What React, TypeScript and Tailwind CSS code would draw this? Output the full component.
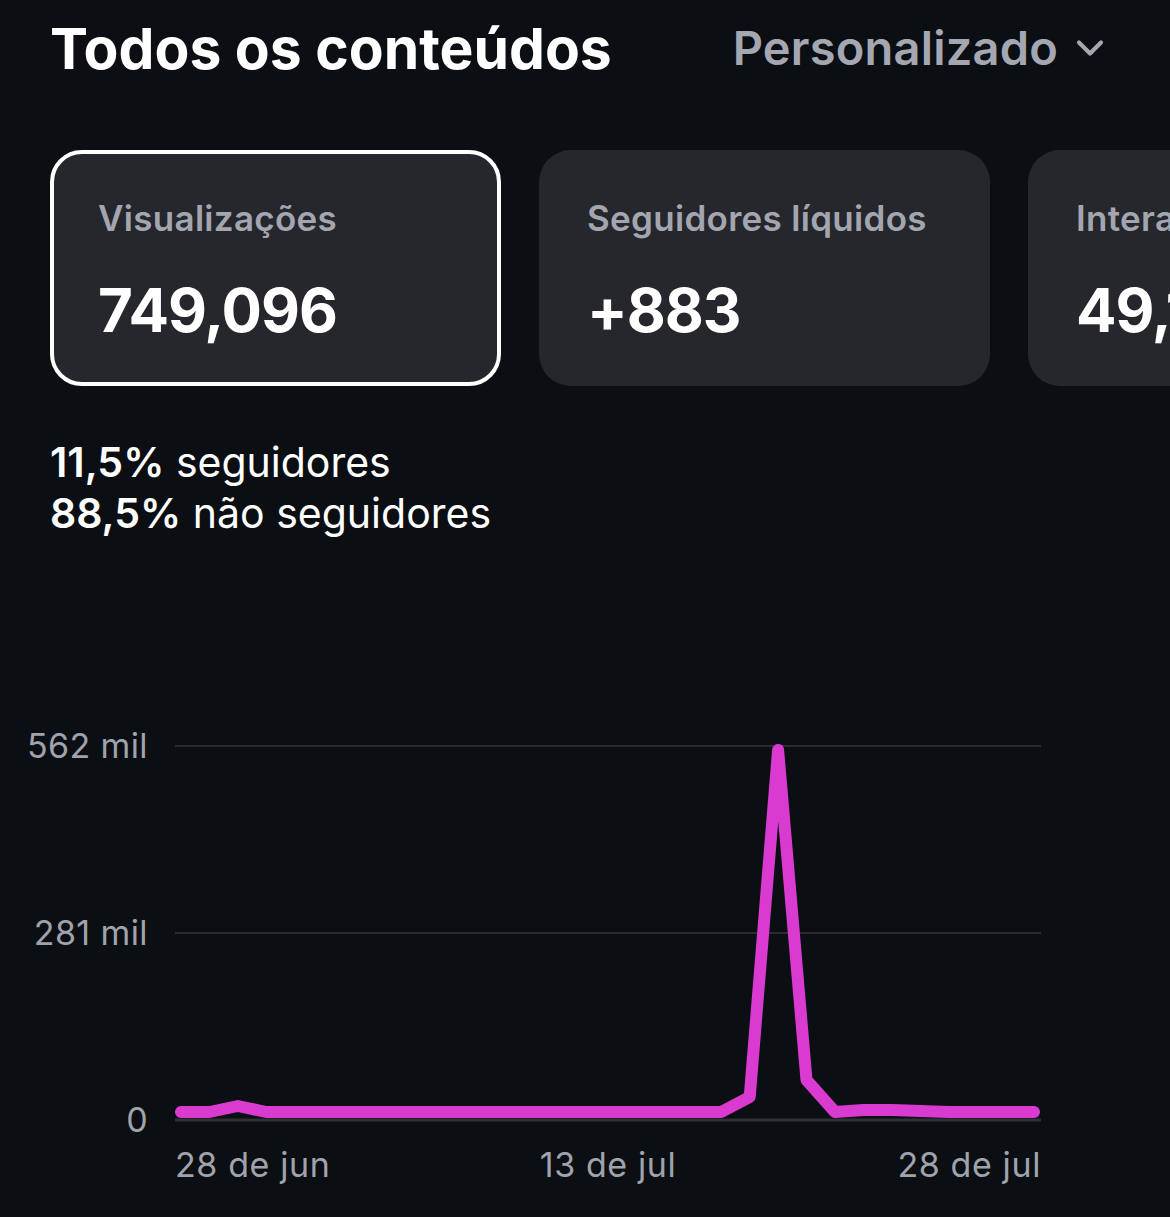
import { ChevronDown } from 'lucide-react';

const cards = [
  { label: 'Visualizações', value: '749,096', active: true },
  { label: 'Seguidores líquidos', value: '+883', active: false },
  { label: 'Interações', value: '49,172', active: false },
];

// daily views, 28 jun -> 28 jul, as y in chart px (386 = baseline)
const points = [
  386, 386, 380, 386, 386, 386, 386, 386, 386, 386, 386, 386, 386, 386, 386, 386,
  386, 386, 386, 386, 371, 24, 354, 386, 384, 384, 385, 386, 386, 386, 386,
];

function ViewsChart() {
  const step = 853 / (points.length - 1);
  const d = points.map((y, i) => `${i === 0 ? 'M' : 'L'}${(6 + i * step).toFixed(1)} ${y}`).join(' ');

  return (
    <div>
      <div className="flex">
        <div className="w-[148px] h-[414px] flex flex-col justify-between items-end text-[34px] tracking-[0.4px] leading-[40px] text-[#a0a3ab]">
          <span>562 mil</span>
          <span>281 mil</span>
          <span>0</span>
        </div>
        <svg width="866" height="414" viewBox="0 0 866 414" className="ml-[27px] block">
          <line x1="0" y1="20" x2="866" y2="20" stroke="#2a2c31" strokeWidth="2" />
          <line x1="0" y1="207" x2="866" y2="207" stroke="#2a2c31" strokeWidth="2" />
          <line x1="0" y1="394" x2="866" y2="394" stroke="#2e3035" strokeWidth="3" />
          <path d={d} fill="none" stroke="#d93bd1" strokeWidth="12" strokeLinecap="round" strokeLinejoin="round" />
        </svg>
      </div>
      <div className="ml-[175px] w-[866px] grid grid-cols-3 mt-[5px] text-[34px] tracking-[0.6px] leading-[40px] text-[#a0a3ab]">
        <span className="text-left whitespace-nowrap">28 de jun</span>
        <span className="text-center whitespace-nowrap">13 de jul</span>
        <span className="text-right whitespace-nowrap">28 de jul</span>
      </div>
    </div>
  );
}

export default function App() {
  return (
    <div className="w-[1170px] h-[1217px] bg-[#0b0e13] overflow-hidden font-['Inter','Noto_Sans',sans-serif]">
      <header className="flex items-start pl-[50px] pr-[58px] pt-[20px] h-[150px]">
        <h1 className="text-[57px] leading-none font-bold tracking-[0px] text-white">Todos os conteúdos</h1>
        <button className="ml-auto mt-[4px] flex items-center gap-[10px] text-[47px] leading-none font-semibold tracking-[0.2px] text-[#a4a7b2]">
          Personalizado
          <ChevronDown className="w-[44px] h-[44px]" strokeWidth={2.3} />
        </button>
      </header>

      <div className="flex gap-[38px] pl-[50px]">
        {cards.map((card) => (
          <div
            key={card.label}
            className={
              card.active
                ? 'shrink-0 w-[451px] h-[236px] rounded-[32px] bg-[#25272c] border-4 border-white pl-[44px] pt-[44px]'
                : 'shrink-0 w-[451px] h-[236px] rounded-[32px] bg-[#25272c] pl-[48px] pt-[48px]'
            }
          >
            <div className="text-[35px] leading-[41px] font-semibold tracking-[0.3px] text-[#a3a6b0] whitespace-nowrap">{card.label}</div>
            <div className="mt-[34px] text-[60px] leading-[75px] font-bold tracking-[-1px] text-white whitespace-nowrap">{card.value}</div>
          </div>
        ))}
      </div>

      <div className="mt-[51px] pl-[50px] text-[41px] leading-[51px] text-white">
        <p><span className="font-semibold">11,5%</span> seguidores</p>
        <p><span className="font-semibold">88,5%</span> não seguidores</p>
      </div>

      <div className="mt-[187px]">
        <ViewsChart />
      </div>
    </div>
  );
}
